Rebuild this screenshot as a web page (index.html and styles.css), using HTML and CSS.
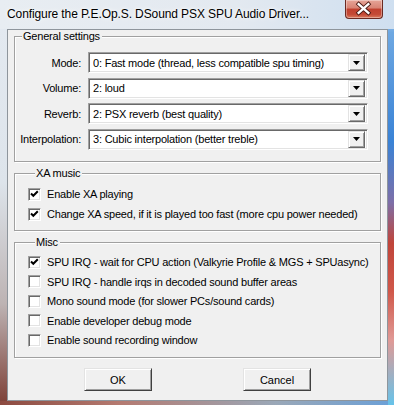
FILE: index.html
```html
<!DOCTYPE html>
<html>
<head>
  <title>Configure the P.E.Op.S. DSound PSX SPU Audio Driver...</title>
  <link rel="stylesheet" href="styles.css">
</head>
<body>

<div class="window">
  <div class="titlebar">
    <span class="title">Configure the P.E.Op.S. DSound PSX SPU Audio Driver...</span>
    <span class="close-btn">
      <svg width="38" height="19" viewBox="0 0 38 19">
        <path d="M14 5 L24 14 M24 5 L14 14" stroke="#4a1a14" stroke-width="4.2" stroke-linecap="square"/>
        <path d="M14 5 L24 14 M24 5 L14 14" stroke="#ffffff" stroke-width="2.4" stroke-linecap="square"/>
      </svg>
    </span>
  </div>

  <div class="client">

    <!-- General settings -->
    <fieldset class="group general">
      <legend>General settings</legend>
      <div class="field-row">
        <label>Mode:</label>
        <div class="combo"><span class="combo-text">0: Fast mode (thread, less compatible spu timing)</span><span class="combo-btn"><svg width="7" height="4" viewBox="0 0 7 4"><path d="M0 0 H7 L3.5 4 Z" fill="#000"/></svg></span></div>
      </div>
      <div class="field-row">
        <label>Volume:</label>
        <div class="combo"><span class="combo-text">2: loud</span><span class="combo-btn"><svg width="7" height="4" viewBox="0 0 7 4"><path d="M0 0 H7 L3.5 4 Z" fill="#000"/></svg></span></div>
      </div>
      <div class="field-row">
        <label>Reverb:</label>
        <div class="combo"><span class="combo-text">2: PSX reverb (best quality)</span><span class="combo-btn"><svg width="7" height="4" viewBox="0 0 7 4"><path d="M0 0 H7 L3.5 4 Z" fill="#000"/></svg></span></div>
      </div>
      <div class="field-row">
        <label>Interpolation:</label>
        <div class="combo"><span class="combo-text">3: Cubic interpolation (better treble)</span><span class="combo-btn"><svg width="7" height="4" viewBox="0 0 7 4"><path d="M0 0 H7 L3.5 4 Z" fill="#000"/></svg></span></div>
      </div>
    </fieldset>

    <!-- XA music -->
    <fieldset class="group xa">
      <legend>XA music</legend>
      <div class="check-row"><span class="box"><svg width="11" height="11" viewBox="0 0 11 11"><path d="M2 4.5 L4.3 6.8 L8.8 2.3" fill="none" stroke="#000" stroke-width="2"/></svg></span>Enable XA playing</div>
      <div class="check-row"><span class="box"><svg width="11" height="11" viewBox="0 0 11 11"><path d="M2 4.5 L4.3 6.8 L8.8 2.3" fill="none" stroke="#000" stroke-width="2"/></svg></span>Change XA speed, if it is played too fast (more cpu power needed)</div>
    </fieldset>

    <!-- Misc -->
    <fieldset class="group misc">
      <legend>Misc</legend>
      <div class="check-row"><span class="box"><svg width="11" height="11" viewBox="0 0 11 11"><path d="M2 4.5 L4.3 6.8 L8.8 2.3" fill="none" stroke="#000" stroke-width="2"/></svg></span>SPU IRQ - wait for CPU action (Valkyrie Profile &amp; MGS + SPUasync)</div>
      <div class="check-row"><span class="box"></span>SPU IRQ - handle irqs in decoded sound buffer areas</div>
      <div class="check-row"><span class="box"></span>Mono sound mode (for slower PCs/sound cards)</div>
      <div class="check-row"><span class="box"></span>Enable developer debug mode</div>
      <div class="check-row"><span class="box"></span>Enable sound recording window</div>
    </fieldset>

    <div class="buttons">
      <button type="button" class="btn">OK</button>
      <button type="button" class="btn">Cancel</button>
    </div>

  </div>
</div>

</body>
</html>
```

FILE: styles.css
```css
* {
  box-sizing: border-box;
}

body {
  margin: 0;
  font-family: "Liberation Sans", Arial, sans-serif;
  font-size: 11px;
  letter-spacing: -0.2px;
  color: #000;
  background: #3b82c9;
}

/* Aero window frame */
.window {
  width: 394px;
  height: 405px;
  display: flex;
  flex-direction: column;
  overflow: hidden;
  background:
    linear-gradient(to bottom, #d6e6f5 0%, #6ea8e2 8%, #3a83d6 35%, #7d6fa8 50%, #c0453a 60%, #d0584a 72%, #e09a96 84%, #66c3ea 100%) right top / 6px 100% no-repeat,
    linear-gradient(to right, #8c4a40 0%, #b57a70 30%, #9aa8b8 70%, #6aa0d8 100%) left bottom / 100% 4px no-repeat,
    linear-gradient(to bottom, #e4eaf1 0%, #dde4eb 45%, #bdb3b3 75%, #7d3f36 100%);
}

.titlebar {
  height: 29px;
  display: flex;
  align-items: flex-start;
  background: linear-gradient(to right, #e8edf2 0%, #e3e9f0 60%, #cfdff0 100%);
}

.title {
  flex: 1;
  padding: 7px 0 0 7px;
  font-size: 12px;
  letter-spacing: -0.1px;
  line-height: 15px;
  white-space: nowrap;
  text-shadow: 0 0 6px #fff, 0 0 3px #fff;
}

.close-btn {
  width: 38px;
  height: 19px;
  margin-right: 11px;
  border: 1px solid #6b2a22;
  border-top: none;
  border-radius: 0 0 4px 4px;
  background: linear-gradient(to bottom, #e6a598 0%, #d88373 45%, #c0402e 50%, #c44a36 80%, #d97a5e 100%);
  box-shadow: inset 0 0 0 1px rgba(255, 255, 255, 0.35);
  display: flex;
}

.close-btn svg {
  margin: -1px 0 0 -1px;
}

/* Dialog client area */
.client {
  height: 372px;
  margin: 0 6px 0 7px;
  border: 1px solid #8e959c;
  background: #f0f0f0;
  padding: 0 6px;
}

/* Group boxes */
.group {
  margin: 0 0 5px 0;
  padding: 0;
  border: 1px solid #a0a0a0;
  box-shadow: inset 1px 1px 0 #fff, 1px 1px 0 #fff;
  min-width: 0;
}

.group legend {
  margin-left: 7px;
  padding: 0 2px 0 1px;
  line-height: 13px;
  background: #f0f0f0;
}

.general {
  padding: 9px 12px 11px 0;
  display: grid;
  grid-template-columns: 66px 1fr;
  grid-auto-rows: 21px;
  column-gap: 7px;
  row-gap: 4.5px;
}

.field-row {
  display: contents;
}

.field-row label {
  text-align: right;
  align-self: center;
}

/* Classic sunken combo box */
.combo {
  display: flex;
  align-items: center;
  background: #fff;
  border: 1px solid;
  border-color: #a0a0a0 #fff #fff #a0a0a0;
  box-shadow: inset 1px 1px 0 #696969, inset -1px -1px 0 #e3e3e3;
  padding: 2px 2px 2px 4px;
}

.combo-text {
  flex: 1;
  white-space: nowrap;
  overflow: hidden;
}

.combo-btn {
  width: 17px;
  height: 17px;
  display: flex;
  align-items: center;
  justify-content: center;
  background: #f0f0f0;
  border: 1px solid;
  border-color: #e3e3e3 #696969 #696969 #e3e3e3;
  box-shadow: inset 1px 1px 0 #fff, inset -1px -1px 0 #a0a0a0;
}

/* Check boxes */
.xa {
  padding: 4.5px 0 6px 13px;
}

.xa .check-row {
  height: 20px;
}

.misc {
  padding: 3.5px 0 7px 13px;
}

.misc .check-row {
  height: 19.5px;
}

.check-row {
  display: flex;
  align-items: center;
  gap: 6px;
  white-space: nowrap;
}

.box {
  width: 13px;
  height: 13px;
  flex: none;
  background: #fff;
  border: 1px solid;
  border-color: #a0a0a0 #fff #fff #a0a0a0;
  box-shadow: inset 1px 1px 0 #696969, inset -1px -1px 0 #e3e3e3;
  display: flex;
}

/* Push buttons */
.buttons {
  display: flex;
  justify-content: center;
  gap: 91px;
  margin-top: 10px;
}

.btn {
  width: 68px;
  height: 23px;
  padding: 0;
  font-family: "Liberation Sans", Arial, sans-serif;
  font-size: 11px;
  color: #000;
  background: #f0f0f0;
  border: 1px solid;
  border-color: #e3e3e3 #404040 #404040 #e3e3e3;
  box-shadow: inset 1px 1px 0 #fff, inset -1px -1px 0 #a0a0a0;
}
```
